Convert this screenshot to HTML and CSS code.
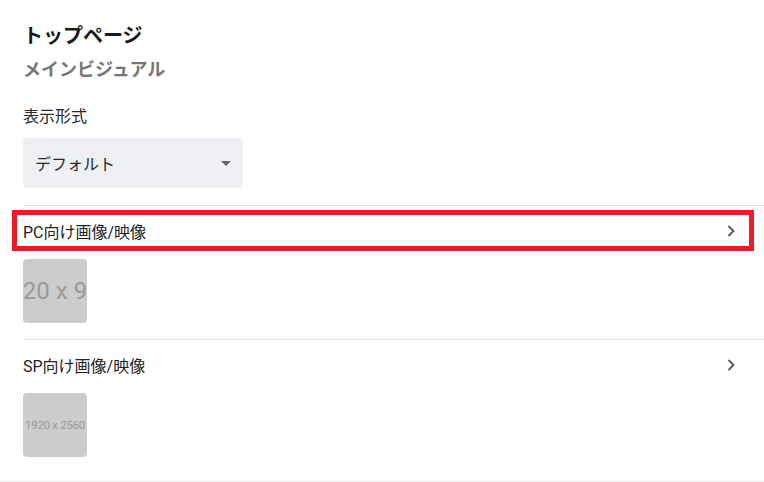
FILE: index.html
```html
<!DOCTYPE html>
<html lang="ja">
<head>
<meta charset="utf-8">
<link rel="stylesheet" href="styles.css">
</head>
<body>
<div class="page">
  <div class="head">
    <h1 class="title">トップページ</h1>
    <h2 class="subtitle">メインビジュアル</h2>
    <div class="field-label">表示形式</div>
    <div class="select">
      <span class="select-text">デフォルト</span>
      <span class="select-arrow"></span>
    </div>
  </div>
  <div class="section">
    <div class="row">
      <span class="row-label">PC向け画像/映像</span>
      <svg class="chevron" width="8" height="12" viewBox="0 0 8 12"><path d="M1.5 1 L6.5 6 L1.5 11" fill="none" stroke="#555" stroke-width="1.8"/></svg>
      <div class="highlight"></div>
    </div>
    <div class="thumb"><span class="thumb-text big">1920 x 960</span></div>
  </div>
  <div class="section last">
    <div class="row">
      <span class="row-label">SP向け画像/映像</span>
      <svg class="chevron" width="8" height="12" viewBox="0 0 8 12"><path d="M1.5 1 L6.5 6 L1.5 11" fill="none" stroke="#555" stroke-width="1.8"/></svg>
    </div>
    <div class="thumb"><span class="thumb-text small">1920 x 2560</span></div>
  </div>
  <div class="bottom-line"></div>
</div>
</body>
</html>
```
FILE: styles.css
```css
html, body {
  margin: 0;
  padding: 0;
  background: #fff;
}
body {
  font-family: Roboto, "Noto Sans CJK JP", sans-serif;
  color: #222;
  width: 764px;
  height: 482px;
  overflow: hidden;
}
.page {
  padding-top: 22px;
}
.head {
  padding-left: 23px;
}
.title {
  margin: 0;
  font-size: 20px;
  line-height: 28px;
  font-weight: 700;
  color: #1a1a1a;
}
.subtitle {
  margin: 7px 0 0;
  font-size: 18px;
  line-height: 26px;
  font-weight: 700;
  color: #767676;
}
.field-label {
  margin-top: 23px;
  font-size: 16px;
  line-height: 22px;
  color: #2a2a2a;
}
.select {
  margin-top: 10px;
  width: 220px;
  height: 50px;
  box-sizing: border-box;
  background: #eef0f4;
  border-radius: 4px;
  display: flex;
  align-items: center;
  justify-content: space-between;
  padding: 0 12px 0 12px;
}
.select-text {
  font-size: 16px;
  color: #2a2a2a;
}
.select-arrow {
  width: 0;
  height: 0;
  border-left: 5px solid transparent;
  border-right: 5px solid transparent;
  border-top: 5px solid #666;
}
.section {
  margin-left: 23px;
  margin-top: 17px;
  border-top: 1px solid #e2e2e2;
  padding-bottom: 16px;
}
.section + .section {
  margin-top: 0;
}
.section.last {
  padding-bottom: 24px;
}
.row {
  position: relative;
  height: 50px;
  display: flex;
  align-items: center;
  justify-content: space-between;
  padding-right: 29px;
}
.row-label {
  font-size: 16px;
  color: #222;
}
.chevron {
  display: block;
}
.highlight {
  position: absolute;
  left: -11px;
  right: 10px;
  top: 4px;
  bottom: 5px;
  border: 5px solid #ec1c24;
  box-sizing: border-box;
  pointer-events: none;
}
.thumb {
  margin-top: 3px;
  width: 64px;
  height: 64px;
  border-radius: 4px;
  background: #cccccc;
  overflow: hidden;
  display: flex;
  align-items: center;
  justify-content: center;
  white-space: nowrap;
}
.thumb-text {
  color: #9a9a9a;
  font-family: Roboto, sans-serif;
}
.thumb-text.big {
  font-size: 24px;
}
.thumb-text.small {
  font-size: 11.5px;
  letter-spacing: -0.3px;
}
.bottom-line {
  height: 1px;
  background: #efefef;
}
```
